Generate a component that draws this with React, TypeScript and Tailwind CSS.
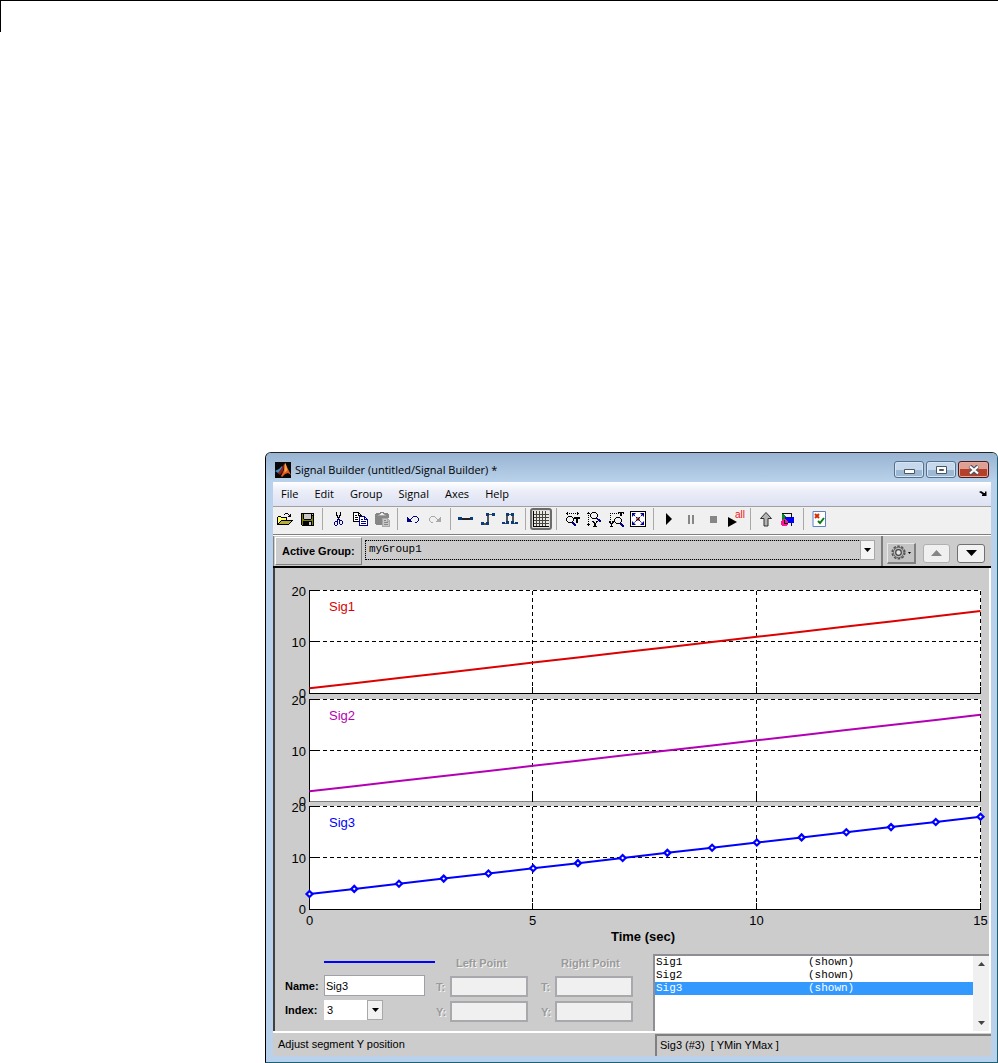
import type { ReactNode } from "react";

const PALETTE: Record<string, string> = {
  K: "#000000",
  W: "#ffffff",
  Y: "#ffff66",
  O: "#808000",
  F: "#b8b03c",
  S: "#c8c8c8",
  G: "#868686",
  L: "#a8a8a8",
  N: "#000080",
};

function Pixels({ rows }: { rows: string[] }) {
  const width = Math.max(...rows.map((r) => r.length));
  return (
    <svg width={width} height={rows.length} shapeRendering="crispEdges" className="shrink-0" aria-hidden="true">
      {rows.flatMap((row, y) =>
        [...row].map((c, x) =>
          PALETTE[c] ? <rect key={`${x}-${y}`} x={x} y={y} width={1} height={1} fill={PALETTE[c]} /> : null
        )
      )}
    </svg>
  );
}

const OPEN = [
  "........KKK.....",
  ".......K...K.K..",
  "............KK..",
  ".KKK.......KKK..",
  "KYYYKKKKKK......",
  "KYYYYYYYYK......",
  "KYYYYYYYYK......",
  "KYYYKKKKKKKKKKKK",
  "KYYKFFFFFFFFFFK.",
  "KYKFFFFFFFFFFK..",
  "KKFFFFFFFFFFK...",
  "KKKKKKKKKKKK....",
];
const SAVE = [
  "KKKKKKKKKKKKK",
  "KOKSSSSSSSKSK",
  "KOKSSSSSSSKKK",
  "KOKSSSSSSSKOK",
  "KOKSSSSSSSKOK",
  "KOKSSSSSSSKOK",
  "KOOKKKKKKKOOK",
  "KOOOOOOOOOOOK",
  "KOKKKKKKKKKOK",
  "KOKKKKKKSSKOK",
  "KOKKKKKKSSKOK",
  "KOKKKKKKSSKOK",
  ".KKKKKKKKKKKK",
];
const CUT = [
  "..K...K..",
  "..K...K..",
  "..K...K..",
  "..KK.KK..",
  "...K.K...",
  "...KKK...",
  "....K....",
  "...NNN...",
  "...N.NNN.",
  ".NNN.N..N",
  "N..N.N..N",
  "N..N.N..N",
  "N..N..NN.",
  ".NN......",
];
const COPY = [
  "KKKKKK.........",
  "KWWWWKK........",
  "KWWWWKWK.......",
  "KWKKWKKKK......",
  "KWWWWWNNNNNN...",
  "KWKKKWNWWWWNN..",
  "KWWWWWNWWWWNWN.",
  "KWKKKWNWNNWNNNN",
  "KWWWWWNWWWWWWWN",
  "KKKKKKNWNNNNNWN",
  "......NWWWWWWWN",
  "......NWNNNNNWN",
  "......NWWWWWWWN",
  "......NNNNNNNNN",
];
const PASTE = [
  ".....GGGG......",
  ".GGGGG..GGGGG..",
  "GGGGL....LGGGG.",
  "GGGLLLLLLLLGGG.",
  "GGGGGGGGGGGGGG.",
  "GGGGGGGGGGGGGG.",
  "GGGGGGGLLLLLL..",
  "GGGGGGGLSSSSLL.",
  "GGGGGGGLSGGSLSL",
  "GGGGGGGLSSSSLLL",
  "GGGGGGGLSGGGGSL",
  "GGGGGGGLSSSSSSL",
  ".GGGGGGLSGGGGSL",
  ".......LSSSSSSL",
  ".......LLLLLLLL",
];
const UNDO = [
  "......NNNN..",
  "N....N....N.",
  "NN..N......N",
  "NNNN.......N",
  "NNNN.......N",
  "NNNNN.....N.",
  "........NN..",
];
const REDO = [
  "..LLLL......",
  ".L....L....L",
  "L......L..LL",
  "L.......LLLL",
  "L.......LLLL",
  ".L.....LLLLL",
  "..LL........",
];
const ZOOM_T = [
  "..K.........K..",
  ".KK.K.K.K.K.KK.",
  "..K.........K..",
  "...............",
  "...KKKK........",
  "..K....K.KKKKKK",
  ".K......KKKKKKK",
  ".K......K..KK..",
  ".K......K..KK..",
  "..K....K...KK..",
  "...KKKKNN..KK..",
  ".......NNN.....",
  "........NNN....",
  ".........NN....",
];
const ZOOM_Y = [
  ".K...KKKK......",
  "KKK.K....K.....",
  "...K......K....",
  ".K.K......K....",
  "...K......K....",
  ".K..K....K.....",
  ".....KKKKNN....",
  ".K........NNN..",
  "...........NNN.",
  ".K...KK..KK.NN.",
  "......KK.K.....",
  ".K.....KK......",
  "KKK....KK......",
  ".K.....KK......",
  "......KKKK.....",
];
const ZOOM_TY = [
  ".........KKKKKK",
  ".K.K.K.K.K.KK.K",
  "...........KK..",
  ".K.........KK..",
  "...............",
  ".K.....KKKK....",
  "......K....K...",
  ".K...K......K..",
  ".....K......K..",
  "KK.KKK......K..",
  "KK.KK.K....K...",
  ".KKK...KKKKNN..",
  "..K........NNN.",
  "..K.........NNN",
  ".KKK.........NN",
];

const Sep = () => <span className="mx-1 h-[22px] w-px bg-[#a8a8a8]" aria-hidden="true" />;

function Tool({ label, pressed, children }: { label: string; pressed?: boolean; children: ReactNode }) {
  return (
    <button
      type="button"
      aria-label={label}
      aria-pressed={pressed}
      className={
        pressed
          ? "flex h-[22px] w-[22px] shrink-0 items-center justify-center rounded-[3px] border-2 border-[#6b6b6b] bg-[#dcdcdc]"
          : "flex h-[22px] w-[22px] shrink-0 items-center justify-center"
      }
    >
      {children}
    </button>
  );
}

function Toolbar() {
  return (
    <div role="toolbar" aria-label="Main" className="flex h-[27px] items-start bg-[#f0f0f0] pt-px pl-px">
      <Tool label="Open"><Pixels rows={OPEN} /></Tool>
      <Tool label="Save"><Pixels rows={SAVE} /></Tool>
      <Sep />
      <Tool label="Cut"><Pixels rows={CUT} /></Tool>
      <Tool label="Copy"><Pixels rows={COPY} /></Tool>
      <Tool label="Paste"><Pixels rows={PASTE} /></Tool>
      <Sep />
      <Tool label="Undo"><Pixels rows={UNDO} /></Tool>
      <Tool label="Redo"><Pixels rows={REDO} /></Tool>
      <Sep />
      <Tool label="Constant">
        <svg width="16" height="16" shapeRendering="crispEdges">
          <path d="M2 7h12v2h-12z" fill="#222" />
          <path d="M0 6h4v3h-4zM12 6h3v3h-3z" fill="#0b3c78" />
        </svg>
      </Tool>
      <Tool label="Step">
        <svg width="16" height="16" shapeRendering="crispEdges">
          <path d="M2 12h6v2h-6zM7 3h2v10h-2zM7 3h8v1h-8z" fill="#555" />
          <path d="M1 11h3v3h-3zM6 11h3v3h-3zM6 2h3v3h-3zM12 2h3v3h-3z" fill="#0b3c78" />
        </svg>
      </Tool>
      <Tool label="Pulse">
        <svg width="16" height="16" shapeRendering="crispEdges">
          <path d="M1 12h5v1h-5zM4 3h2v9h-2zM5 3h6v1h-6zM10 3h2v9h-2zM10 12h5v1h-5z" fill="#555" />
          <path d="M0 11h3v2h-3zM4 10h3v3h-3zM4 2h3v3h-3zM9 2h3v3h-3zM9 10h3v3h-3zM13 11h3v2h-3z" fill="#0b3c78" />
        </svg>
      </Tool>
      <Sep />
      <Tool label="Snap grid" pressed>
        <svg width="16" height="16" shapeRendering="crispEdges" className="shrink-0">
          <path d="M0 0h16v16h-16z" fill="#ece8dc" />
          <path d="M0 3.5h16M0 6.5h16M0 9.5h16M0 12.5h16M3.5 0v16M6.5 0v16M9.5 0v16M12.5 0v16" stroke="#444" />
          <path d="M.5 0v15.5h15.5" stroke="#000" fill="none" />
        </svg>
      </Tool>
      <Sep />
      <Tool label="Zoom time"><Pixels rows={ZOOM_T} /></Tool>
      <Tool label="Zoom Y"><Pixels rows={ZOOM_Y} /></Tool>
      <Tool label="Zoom time and Y"><Pixels rows={ZOOM_TY} /></Tool>
      <Tool label="Fit view">
        <svg width="16" height="16">
          <path d="M.5 .5h15v15h-15z" fill="#fff" stroke="#000" shapeRendering="crispEdges" />
          <path d="M3 3l10 10M13 3L3 13" stroke="#0000a0" strokeDasharray="3 1" />
          <path d="M2 2h4L2 6zM14 2h-4l4 4zM2 14h4L2 10zM14 14h-4l4-4z" fill="#000090" />
          <path d="M6.5 6.5h3v3h-3z" fill="#400" />
          <path d="M7 7h1v1h-1z" fill="#f33" />
        </svg>
      </Tool>
      <Sep />
      <Tool label="Start">
        <svg width="16" height="16"><path d="M5 2v12l6-6z" fill="#000" /></svg>
      </Tool>
      <Tool label="Pause">
        <svg width="16" height="16" shapeRendering="crispEdges"><path d="M5 4h2v9h-2zM9 4h2v9h-2z" fill="#868686" /></svg>
      </Tool>
      <Tool label="Stop">
        <svg width="16" height="16" shapeRendering="crispEdges"><path d="M5 5h7v7h-7z" fill="#868686" /></svg>
      </Tool>
      <Tool label="Run all">
        <svg width="18" height="18" className="shrink-0 overflow-visible">
          <path d="M2 7v10l9-5z" fill="#000" />
          <text x="9" y="8" fontSize="10" fill="#ee1111" fontFamily="Liberation Sans, sans-serif">all</text>
        </svg>
      </Tool>
      <Sep />
      <Tool label="Go to parent">
        <svg width="14" height="16">
          <path d="M7 1.5L12.500 7.500H9V15H5V7.500H1.500z" fill="#b4b4b4" stroke="#333" />
        </svg>
      </Tool>
      <Tool label="Simulink">
        <svg width="14" height="15" shapeRendering="crispEdges">
          <path d="M1 1l6 5-3 7H1z" fill="#008a20" />
          <path d="M4 5h9v6h-9z" fill="#0000ff" />
          <path d="M1 1.500h9.500v4M10.500 11v3" stroke="#111" fill="none" />
          <circle cx="3.500" cy="10.500" r="3.500" fill="#ff1493" />
          <path d="M3.500 8v3h3" stroke="#111" fill="none" />
        </svg>
      </Tool>
      <Sep />
      <Tool label="Verification settings">
        <svg width="14" height="16">
          <path d="M1 .5h12.500v15H1z" fill="#fff" stroke="#5d82c4" />
          <path d="M3 3l4 4M7 3L3 7" stroke="#d92b00" strokeWidth="2" />
          <path d="M6 10l2 2 4-5" stroke="#0a7a0a" strokeWidth="2" fill="none" />
        </svg>
      </Tool>
    </div>
  );
}

const MENUS = ["File", "Edit", "Group", "Signal", "Axes", "Help"];

const MatlabLogo = () => (
  <svg width="16" height="16" aria-hidden="true">
    <path d="M0 0h16v16H0z" fill="#080808" />
    <path d="M0 9l4-2 3-3 1 3-3 5-2-1z" fill="#3f8fc8" />
    <path d="M3 11l3-4 3-5 1-1-2 8-3 4z" fill="#8e1d12" />
    <path d="M6 14l3-6 1-7 2 4 4 8-3-2-3 1-3 3z" fill="#e2591b" />
    <path d="M9.500 3l1-2 2 7-3 3z" fill="#f9a44a" />
  </svg>
);

function TitleBar() {
  const control =
    "flex h-[17px] w-[30px] items-center justify-center rounded-[3px] border border-[#54708c] bg-linear-to-b from-[#c6d9ec] from-50% to-[#9db8d2] to-50% shadow-[inset_0_0_0_1px_#d6e5f3]";
  return (
    <div className="flex h-[29px] items-center bg-linear-to-b from-[#98b4d2] to-[#bad2eb] pt-1 pr-[8px] pl-[9px]">
      <MatlabLogo />
      <h1 className="ml-1 flex-1 font-['Open_Sans',sans-serif] text-[11px] leading-4 whitespace-nowrap text-black">
        Signal Builder (untitled/Signal Builder) *
      </h1>
      <div className="flex gap-0.5">
        <button type="button" aria-label="Minimize" className={control}>
          <svg width="11" height="11"><path d="M.5 5.500h10v4h-10z" fill="#fff" stroke="#4a5664" /></svg>
        </button>
        <button type="button" aria-label="Maximize" className={control}>
          <svg width="11" height="10">
            <path d="M.5 1.500h10v7h-10z" fill="#fff" stroke="#4a5664" />
            <path d="M3.500 4.500h4v1h-4z" fill="#8fa8c4" stroke="#4a5664" />
          </svg>
        </button>
        <button
          type="button"
          aria-label="Close"
          className="flex h-[17px] w-[31px] items-center justify-center rounded-[3px] border border-[#4d1b1b] bg-linear-to-b from-[#dda093] from-45% to-[#b5402a] to-50% shadow-[inset_0_0_0_1px_#e2aaa0]"
        >
          <svg width="12" height="10">
            <path d="M2 1l8 8M10 1L2 9" stroke="#4a5664" strokeWidth="4" />
            <path d="M2 1.500l8 7M10 1.500l-8 7" stroke="#fff" strokeWidth="2.200" />
          </svg>
        </button>
      </div>
    </div>
  );
}

function MenuBar() {
  return (
    <nav className="flex h-6 items-center justify-between bg-linear-to-b from-white from-0% via-[#eceff8] via-35% to-[#dde1f2] pr-1 pl-2 font-['Open_Sans',sans-serif] text-[11px] leading-4 text-black">
      <div className="flex gap-4">
        {MENUS.map((m) => (
          <button type="button" key={m}>{m}</button>
        ))}
      </div>
      <button type="button" aria-label="Dock">
        <svg width="8" height="6"><path d="M0 1l2-1 3 2 1 0V0.500h1.500V5H3V3.500L4 3.500z" fill="#000" /></svg>
      </button>
    </nav>
  );
}

function Arrow({ up, color = "#000", w = 7 }: { up?: boolean; color?: string; w?: number }) {
  const h = Math.ceil(w / 2);
  return (
    <svg width={w} height={h} className="shrink-0" aria-hidden="true">
      <path d={up ? `M0 ${h}h${w}L${w / 2} 0z` : `M0 0h${w}L${w / 2} ${h}z`} fill={color} />
    </svg>
  );
}

function GroupBar() {
  return (
    <div className="flex h-[30px] border-l border-[#808080] bg-[#cccccc]">
      <label
        htmlFor="group"
        className="my-px ml-px flex w-[87px] items-center border border-t-white border-r-[#808080] border-b-[#808080] border-l-white pl-[6px] text-[11px] leading-4 font-bold whitespace-nowrap"
      >
        Active Group:
      </label>
      <div className="relative mx-[3px] mt-1 flex h-5 flex-1">
        <select
          id="group"
          className="w-full appearance-none border border-[#a8a8a8] bg-[#cccccc] pb-0.5 pl-[3px] font-['Liberation_Mono',monospace] text-[11px] leading-4 text-black outline-1 -outline-offset-1 outline-black outline-dotted"
        >
          <option>myGroup1</option>
        </select>
        <span className="pointer-events-none absolute inset-y-0 right-0 flex w-[15px] items-center justify-center border border-[#a8a8a8] bg-[#f4f4f4]">
          <Arrow />
        </span>
      </div>
      <div className="ml-[3px] flex w-[110px] items-center gap-[7px] border-l-2 border-[#7c7c7c] pt-1 pl-1">
        <button
          type="button"
          aria-label="Group options"
          className="flex h-[21px] w-[29px] items-center justify-center gap-0.5 border-t border-r-2 border-b-2 border-l border-t-[#e8e8e8] border-r-[#808080] border-b-[#808080] border-l-[#e8e8e8] bg-[#c4c4c4]"
        >
          <svg width="15" height="15" className="shrink-0">
            <circle cx="7.500" cy="7.500" r="6.300" fill="none" stroke="#555" strokeWidth="1.600" strokeDasharray="2.600 1.350" />
            <circle cx="7.500" cy="7.500" r="5.200" fill="#b8b8b8" stroke="#666" />
            <circle cx="7.500" cy="7.500" r="2.800" fill="#e6e6e6" stroke="#444" strokeWidth="1.200" />
          </svg>
          <Arrow w={3} />
        </button>
        <button type="button" aria-label="Previous group" disabled className="flex h-[19px] w-[27px] items-center justify-center rounded-[3px] border border-[#b0b0b0] bg-[#f0f0f0]">
          <Arrow up w={11} color="#868686" />
        </button>
        <button type="button" aria-label="Next group" className="flex h-[19px] w-[28px] items-center justify-center rounded-[3px] border border-[#707070] bg-[#f2f2f2]">
          <Arrow w={11} />
        </button>
      </div>
    </div>
  );
}

const XS = [34.5, 257.5, 481.5, 705.5];
const PLOTS = [
  { name: "Sig1", start: 1, color: "#dc0000", ys: [22.5, 73.5, 125.5], axis: "#000" },
  { name: "Sig2", start: 2, color: "#b400b4", ys: [131.5, 182.5, 233.5], axis: "#808080" },
  { name: "Sig3", start: 3, color: "#0000ff", ys: [238.5, 289.5, 341.5], axis: "#000", markers: true },
];
const T = Array.from({ length: 16 }, (_, i) => i);

function Chart() {
  return (
    <svg viewBox="0 0 714 379" className="block h-auto w-full" role="img" aria-label="Signal plots" fontFamily="Liberation Sans, Arial, sans-serif" fontSize="13">
      {PLOTS.map((p) => {
        const [top, mid, bottom] = p.ys;
        const x = (t: number) => 34.5 + (t * 671) / 15;
        const y = (t: number) => bottom - ((t + p.start) * (bottom - top)) / 20;
        return (
          <g key={p.name}>
            <g shapeRendering="crispEdges" fill="none">
              <rect x="34" y={top - 0.5} width="672" height={bottom - top + 1} fill="#fff" />
              <path
                d={`M34 ${top}H706M34 ${mid}H706M${XS[1]} ${top}V${bottom}M${XS[2]} ${top}V${bottom}M${XS[3]} ${top}V${bottom}`}
                stroke="#000"
                strokeDasharray="4 3"
              />
              <path d={`M34 ${bottom}H706`} stroke={p.axis} />
              <path
                d={`M34.5 ${top - 0.5}V${bottom + 0.5}M34 ${top}h8M34 ${mid}h8M${XS[1]} ${bottom}v-7M${XS[2]} ${bottom}v-7M${XS[3]} ${bottom}v-7`}
                stroke="#000"
              />
            </g>
            <polyline points={T.map((t) => `${x(t)},${y(t)}`).join(" ")} fill="none" stroke={p.color} strokeWidth="2" />
            {p.markers &&
              T.map((t) => (
                <path key={t} d={`M${x(t)} ${y(t) - 3}l3 3-3 3-3-3z`} fill="#fff" stroke={p.color} strokeWidth="2.200" />
              ))}
            <text x="54" y={top + 20} fill={p.color}>{p.name}</text>
            <text x="31" y={top + 5} textAnchor="end">20</text>
            <text x="31" y={mid + 5} textAnchor="end">10</text>
            <text x="31" y={bottom + 4} textAnchor="end">0</text>
          </g>
        );
      })}
      {["0", "5", "10", "15"].map((label, i) => (
        <text key={label} x={XS[i]} y="357" textAnchor="middle">{label}</text>
      ))}
      <text x="368" y="373" textAnchor="middle" fontWeight="bold">Time (sec)</text>
    </svg>
  );
}

function PointFields({ title, id }: { title: string; id: string }) {
  const label = "text-[11px] leading-4 font-bold text-[#9a9a9a] [text-shadow:1px_1px_0_#f4f4f4]";
  const box = "h-[21px] w-[78px] border-2 border-[#a9a9ad] bg-[#f0f0f0]";
  return (
    <fieldset disabled className="grid grid-cols-[14px_78px] content-start items-center gap-y-1">
      <legend className={`mb-[5px] w-full pl-5 ${label}`}>{title}</legend>
      <label htmlFor={`${id}-t`} className={label}>T:</label>
      <input id={`${id}-t`} type="text" className={box} />
      <label htmlFor={`${id}-y`} className={label}>Y:</label>
      <input id={`${id}-y`} type="text" className={box} />
    </fieldset>
  );
}

function Properties() {
  return (
    <div className="flex h-[84px] pl-[10px] text-[11px] leading-4">
      <div className="grid grid-cols-[39px_101px] content-start items-center pt-[14px]">
        <div className="col-start-2 h-0.5 w-[111px] bg-[#0000ff]" />
        <label htmlFor="sig-name" className="mt-3 font-bold">Name:</label>
        <input
          id="sig-name"
          type="text"
          defaultValue="Sig3"
          className="mt-3 h-[21px] w-full border border-[#a0a0a8] bg-white px-px text-[11px] leading-4"
        />
        <label htmlFor="sig-index" className="mt-1 font-bold">Index:</label>
        <div className="relative mt-1 w-[59px]">
          <select id="sig-index" className="block h-5 w-full appearance-none bg-white px-[3px] text-[11px] leading-4">
            <option>3</option>
          </select>
          <span className="pointer-events-none absolute inset-y-0 right-0 flex w-4 items-center justify-center border border-[#a8a8a8] bg-[#f2f2f2]">
            <Arrow />
          </span>
        </div>
      </div>
      <div className="ml-[11px] flex gap-[13px] pt-2">
        <PointFields title="Left Point" id="left" />
        <PointFields title="Right Point" id="right" />
      </div>
      <div className="mt-[7px] ml-5 flex flex-1 border-2 border-r-0 border-b-0 border-[#8e8e94] bg-white">
        <ul role="listbox" aria-label="Signals" className="flex-1 font-['Liberation_Mono',monospace] text-[11px] leading-[13px]">
          {["Sig1", "Sig2", "Sig3"].map((s) => (
            <li
              key={s}
              role="option"
              aria-selected={s === "Sig3"}
              className={s === "Sig3" ? "flex bg-[#3399ff] pl-px text-white" : "flex pl-px text-black"}
            >
              <span className="w-[152px]">{s}</span>
              <span>(shown)</span>
            </li>
          ))}
        </ul>
        <div className="flex w-4 flex-col items-center justify-between bg-[#f0f0f0] py-1">
          <button type="button" aria-label="Scroll up" className="flex h-2 items-center"><Arrow up color="#444" /></button>
          <button type="button" aria-label="Scroll down" className="flex h-2 items-center"><Arrow color="#444" /></button>
        </div>
      </div>
    </div>
  );
}

export default function App() {
  return (
    <div className="bg-white font-['Liberation_Sans',Arial,sans-serif] text-black">
      <div className="h-8 border-t border-l border-black" />
      <main className="pt-[420px] pl-[265px]">
        <section className="rounded-t-[6px] border border-t-[#222] border-r-[#1d5f73] border-b-[#1d5f73] border-l-black bg-[#b9d1ea]">
          <div className="overflow-hidden rounded-t-[5px]">
            <TitleBar />
          </div>
          <div className="mr-[6px] mb-[6px] ml-[7px]">
            <MenuBar />
            <div className="h-px bg-[#a0a0a0]" />
            <Toolbar />
            <div className="h-0.5 border-t border-[#808080] bg-white" />
            <GroupBar />
            <div className="h-0.5 bg-black" />
            <div className="border-r-2 border-l-2 border-r-white border-l-[#404040] bg-[#cccccc]">
              <Chart />
              <Properties />
            </div>
            <footer className="flex h-[25px] border-t-2 border-t-white bg-[#cccccc] text-[11px] leading-[23px]">
              <p className="flex-1 pl-[5px]">Adjust segment Y position</p>
              <p className="mt-px w-[336px] border-t-2 border-l-2 border-[#808080] pl-[3px] leading-[18px] whitespace-pre">Sig3 (#3)  [ YMin YMax ]</p>
            </footer>
          </div>
        </section>
      </main>
    </div>
  );
}
